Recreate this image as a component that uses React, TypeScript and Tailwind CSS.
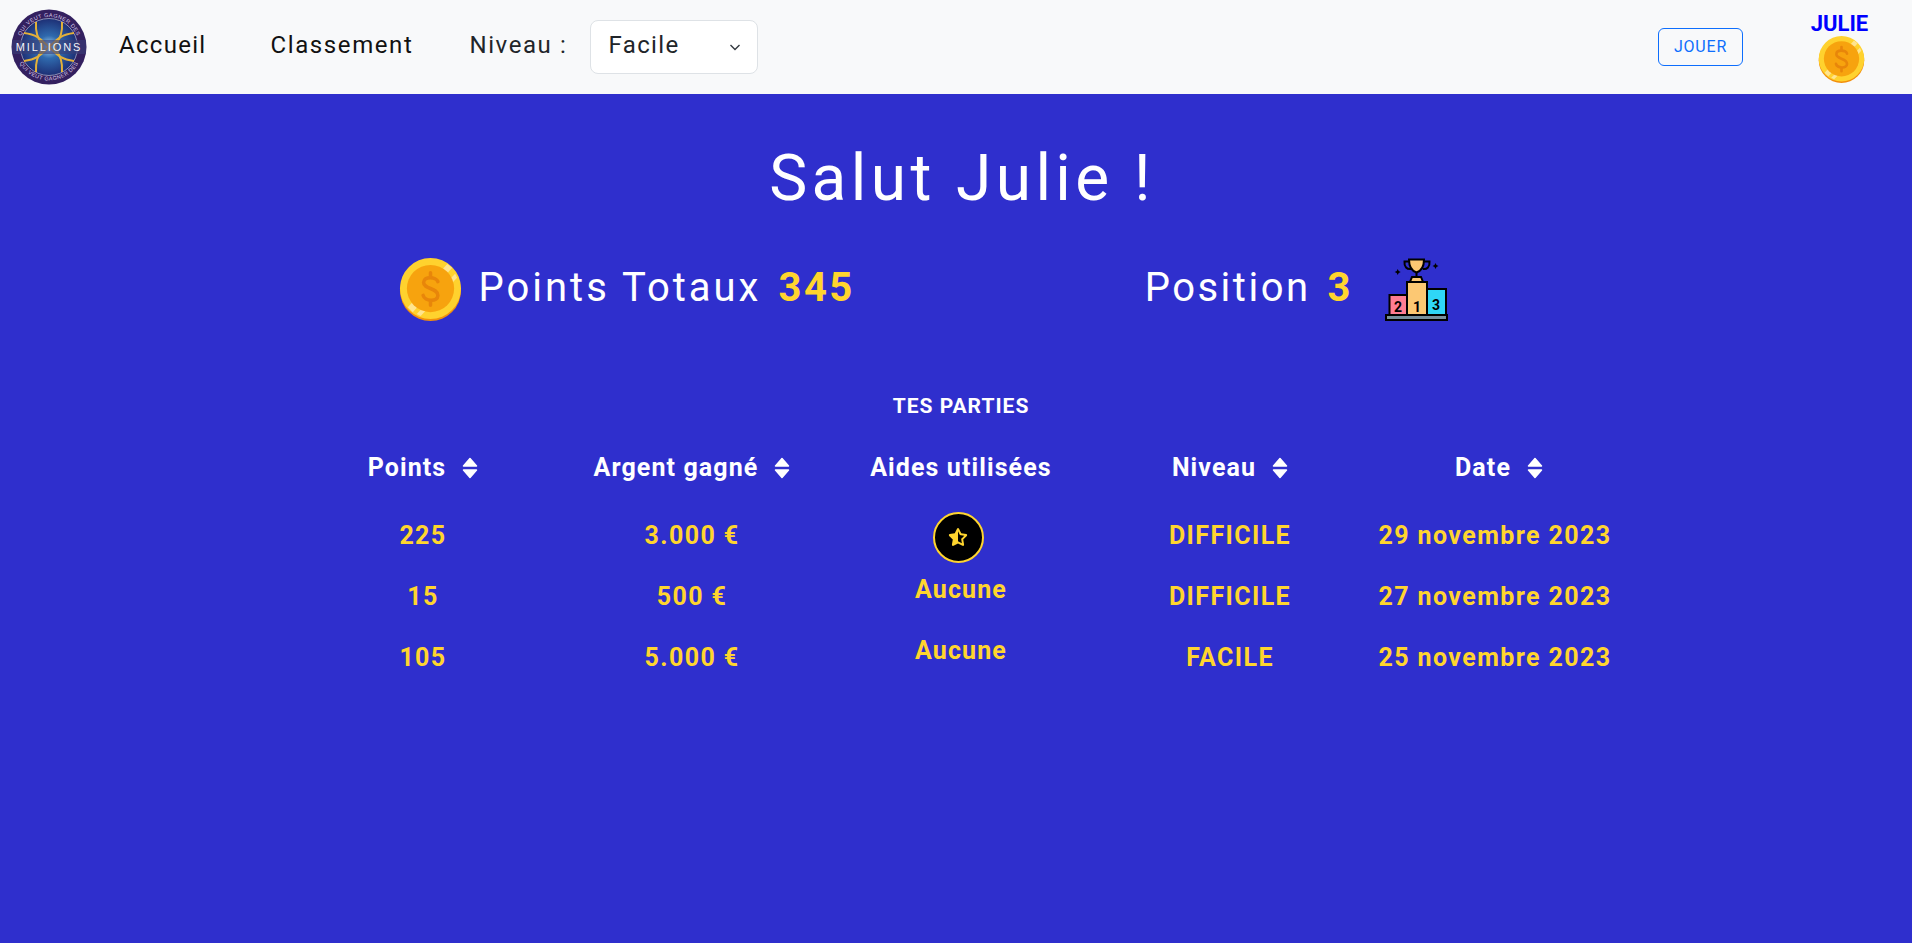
import React from 'react';
import { FaStarHalfStroke } from 'react-icons/fa6';

const Coin = ({ size }: { size: number }) => (
  <svg width={size} height={size} viewBox="0 0 64 64" className="shrink-0">
    <circle cx="32" cy="33" r="31" fill="#f28f0c" />
    <circle cx="32" cy="31" r="31" fill="#ffd22e" />
    <path d="M9 50 L49 6 L54 10 L14 55 Z" fill="#ffe48f" />
    <path d="M18 57 L57 16 L59 20 L22 59 Z" fill="#ffe48f" />
    <circle cx="32" cy="31" r="24" fill="#f7a30e" />
    <path d="M39.5 24 C38 19 25 18 25 25 C25 32 39.5 30 39.5 38 C39.5 45 26 44 24.5 38" fill="none" stroke="#e8860a" strokeWidth="3.6" strokeLinecap="round" />
    <path d="M32 15 V19 M32 44 V48" stroke="#e8860a" strokeWidth="3.6" strokeLinecap="round" />
  </svg>
);

const Podium = () => (
  <svg width="63" height="63" viewBox="0 0 63 63" className="shrink-0">
    <path d="M24 1.5 H39 C39 9 36 13 31.5 14.5 C27 13 24 9 24 1.5 Z" fill="#fcc873" stroke="#000" strokeWidth="2" />
    <path d="M24 3.5 H19.5 C19 9 22 11.5 26 11 M39 3.5 H44.5 C45 9 42 11.5 38 11" fill="none" stroke="#000" strokeWidth="2" />
    <path d="M31.5 14 V19 M27 19 H36 L38 24 H25 Z" fill="#fcc873" stroke="#000" strokeWidth="2" />
    <rect x="22" y="24" width="20" height="33" fill="#fcc873" stroke="#000" strokeWidth="2" />
    <rect x="4.5" y="37" width="17.5" height="20" fill="#ff7d93" stroke="#000" strokeWidth="2" />
    <rect x="42" y="31" width="19" height="26" fill="#2fd6f6" stroke="#000" strokeWidth="2" />
    <rect x="1" y="57" width="61" height="5" fill="#78909c" stroke="#000" strokeWidth="2" />
    <text x="13" y="54" textAnchor="middle" fontSize="14" fontWeight="700" fontFamily="Roboto, sans-serif" fill="#000">2</text>
    <text x="32" y="54" textAnchor="middle" fontSize="14" fontWeight="700" fontFamily="Roboto, sans-serif" fill="#000">1</text>
    <text x="51" y="52" textAnchor="middle" fontSize="14" fontWeight="700" fontFamily="Roboto, sans-serif" fill="#000">3</text>
    <path d="M50.5 5 L51.5 7 L53.5 8 L51.5 9 L50.5 11 L49.5 9 L47.5 8 L49.5 7 Z M12.7 11 L13.7 13 L15.7 14 L13.7 15 L12.7 17 L11.7 15 L9.7 14 L11.7 13 Z" fill="#000" />
  </svg>
);

const Logo = () => (
  <svg width="76" height="76" viewBox="0 0 76 76" className="shrink-0">
    <defs>
      <radialGradient id="logoCore">
        <stop offset="0" stopColor="#b5def4" />
        <stop offset="0.4" stopColor="#2f6aae" />
        <stop offset="1" stopColor="#1d2f75" />
      </radialGradient>
      <path id="logoTop" d="M8 38 A30 30 0 0 1 68 38" />
      <path id="logoBottom" d="M4.5 38 A33.5 33.5 0 0 0 71.5 38" />
    </defs>
    <circle cx="38" cy="38" r="37.5" fill="#33205f" />
    <circle cx="38" cy="38" r="28.5" fill="url(#logoCore)" stroke="#8a8fb5" strokeWidth="1" />
    <g fill="none" stroke="#e3b13a" strokeWidth="2">
      <path d="M13 24 C30 26 32 34 38 38 C44 42 46 50 63 52" />
      <path d="M63 24 C46 26 44 34 38 38 C32 42 30 50 13 52" />
      <path d="M25 13 C24 28 30 32 32 38 C30 44 24 48 25 63" />
      <path d="M51 13 C52 28 46 32 44 38 C46 44 52 48 51 63" />
    </g>
    <rect x="1" y="31" width="74" height="14" fill="#3a3f78" opacity="0.6" />
    <text x="38" y="42" textAnchor="middle" fontSize="11" fontFamily="'Liberation Sans', sans-serif" letterSpacing="1.9" fill="#f4f4f8">MILLIONS</text>
    <text fontSize="5.5" fontFamily="'Liberation Sans', sans-serif" fill="#d9c9e8" letterSpacing="0.4">
      <textPath href="#logoTop" startOffset="50%" textAnchor="middle">QUI VEUT GAGNER DES</textPath>
    </text>
    <text fontSize="5.5" fontFamily="'Liberation Sans', sans-serif" fill="#d9c9e8" letterSpacing="0.4">
      <textPath href="#logoBottom" startOffset="50%" textAnchor="middle">QUI VEUT GAGNER DES</textPath>
    </text>
  </svg>
);

const SortIcon = () => (
  <svg width="16" height="22" viewBox="0 0 16 22" className="shrink-0">
    <path d="M8 1.5 L14.5 9 H1.5 Z M8 20.5 L14.5 13 H1.5 Z" fill="#fff" stroke="#fff" strokeWidth="1.5" strokeLinejoin="round" />
  </svg>
);

const headers = [
  { label: 'Points', sortable: true },
  { label: 'Argent gagné', sortable: true },
  { label: 'Aides utilisées', sortable: false },
  { label: 'Niveau', sortable: true },
  { label: 'Date', sortable: true },
];

const games = [
  { points: '225', money: '3.000 €', help: true, level: 'DIFFICILE', date: '29 novembre 2023' },
  { points: '15', money: '500 €', help: false, level: 'DIFFICILE', date: '27 novembre 2023' },
  { points: '105', money: '5.000 €', help: false, level: 'FACILE', date: '25 novembre 2023' },
];

const App = () => {
  return (
    <div className="min-h-[943px] flex flex-col bg-[#2f2fcd] font-['Roboto',sans-serif]">
      <nav className="h-[94px] bg-[#f8f9fa] flex items-center pl-[11px] pr-[40px]">
        <Logo />
        <a className="ml-8 pb-[4px] text-[24px] tracking-[1.3px] text-[#111]">Accueil</a>
        <a className="ml-[64px] pb-[4px] text-[24px] tracking-[1.6px] text-[#111]">Classement</a>
        <span className="ml-[56px] pb-[4px] text-[24px] tracking-[1.6px] text-[#212529]">Niveau :</span>
        <div className="ml-[23px] w-[168px] h-[54px] bg-white border border-[#dee2e6] rounded-lg flex items-center justify-between pl-[17px] pr-[14px]">
          <span className="pb-[4px] text-[24px] tracking-[1.4px] text-[#212529]">Facile</span>
          <svg width="16" height="16" viewBox="0 0 16 16" fill="none">
            <path d="M3.5 6 L8 10.5 L12.5 6" stroke="#343a40" strokeWidth="1.4" />
          </svg>
        </div>
        <button className="ml-auto w-[85px] h-[38px] border border-[#0d6efd] rounded-md text-[#0d6efd] text-[16px] tracking-[0.8px]">
          JOUER
        </button>
        <div className="ml-[67px] w-[62px] flex flex-col items-center">
          <span className="mr-[3px] text-[22px] leading-[24px] font-bold text-[#0000ff]">JULIE</span>
          <Coin size={47} />
        </div>
      </nav>

      <main className="flex flex-col items-center">
        <h1 className="mt-[47px] ml-[12px] text-[64px] leading-[76px] tracking-[4.4px] text-white">Salut Julie !</h1>

        <div className="mt-[37px] mr-[66px] w-[1049px] flex items-center justify-between">
          <div className="flex items-center">
            <span className="mt-[4px]"><Coin size={63} /></span>
            <span className="ml-[17px] text-[40px] tracking-[3px] text-white">Points Totaux</span>
            <span className="ml-[17px] text-[40px] font-bold tracking-[2.5px] text-[#ffd52e]">345</span>
          </div>
          <div className="flex items-center">
            <span className="text-[40px] tracking-[2.5px] text-white">Position</span>
            <span className="ml-[17px] text-[40px] font-bold text-[#ffd52e]">3</span>
            <span className="ml-[34px] mt-[4px]"><Podium /></span>
          </div>
        </div>

        <h2 className="mt-[73px] ml-[10px] text-[21px] leading-[24px] font-bold tracking-[1px] text-white">TES PARTIES</h2>

        <div className="mt-[12px] ml-[10px] w-[1345px] grid grid-cols-5 text-[25px] font-bold tracking-[1.1px] text-center">
          {headers.map((h) => (
            <div key={h.label} className="h-[75px] flex items-center justify-center gap-[16px] text-white">
              <span>{h.label}</span>
              {h.sortable && <SortIcon />}
            </div>
          ))}
          {games.map((g) => (
            <React.Fragment key={g.date}>
              <div className="h-[61px] flex items-center justify-center tracking-[1.4px] text-[#ffd52e]">{g.points}</div>
              <div className="h-[61px] flex items-center justify-center tracking-[1.4px] text-[#ffd52e]">{g.money}</div>
              <div className="h-[61px] flex items-center justify-center text-[#ffd52e]">
                {g.help ? (
                  <span className="w-[51px] h-[51px] mt-[3px] mr-[6px] rounded-full bg-black border-2 border-[#ffd52e] flex items-center justify-center">
                    <FaStarHalfStroke size={20} color="#ffd52e" />
                  </span>
                ) : (
                  <span className="pb-[14px]">Aucune</span>
                )}
              </div>
              <div className="h-[61px] flex items-center justify-center tracking-[1.4px] text-[#ffd52e]">{g.level}</div>
              <div className="h-[61px] flex items-center justify-center tracking-[1.4px] text-[#ffd52e] pr-[8px]">{g.date}</div>
            </React.Fragment>
          ))}
        </div>
      </main>
    </div>
  );
};

export default App;
